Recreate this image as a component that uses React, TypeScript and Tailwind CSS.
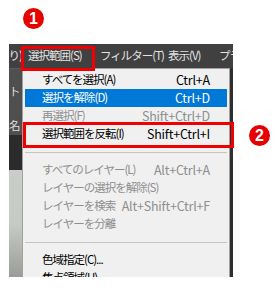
const font = "font-['Noto_Sans_CJK_JP','Noto_Sans',sans-serif]";

type Item =
  | { sep: true }
  | { sep?: false; label: string; key?: string; off?: boolean; on?: boolean };

const items: Item[] = [
  { label: "すべてを選択(A)", key: "Ctrl+A" },
  { label: "選択を解除(D)", key: "Ctrl+D", on: true },
  { label: "再選択(F)", key: "Shift+Ctrl+D", off: true },
  { label: "選択範囲を反転(I)", key: "Shift+Ctrl+I" },
  { sep: true },
  { label: "すべてのレイヤー(L)", key: "Alt+Ctrl+A", off: true },
  { label: "レイヤーの選択を解除(S)", off: true },
  { label: "レイヤーを検索", key: "Alt+Shift+Ctrl+F", off: true },
  { label: "レイヤーを分離", off: true },
  { sep: true },
  { label: "色域指定(C)..." },
  { label: "焦点領域(U)..." },
];

function Row({ item }: { item: Item }) {
  if (item.sep) {
    return (
      <div className="h-[18px] flex items-center">
        <div className="h-px w-full bg-[#c4c4c4]" />
      </div>
    );
  }
  const color = item.on ? "bg-[#0078d7] text-white" : item.off ? "text-[#8e8e8e]" : "text-black";
  return (
    <div className={`h-[18px] flex items-center justify-between whitespace-nowrap pl-[17px] pr-[17px] ${color}`}>
      <span className="text-[11.5px] tracking-[-1px]">{item.label}</span>
      {item.key && <span className="text-[12.5px] tracking-[-0.2px]">{item.key}</span>}
    </div>
  );
}

export default function App() {
  return (
    <div className={`relative w-[280px] h-[291px] bg-white overflow-hidden pt-[44px] pl-[9px] ${font}`}>
      <div className="w-[224px] h-[233px] flex flex-col">
        <div className="h-[24px] shrink-0 bg-[#404040] flex items-center text-[#e4e4e4] text-[11.5px] tracking-[-1px] whitespace-nowrap overflow-hidden">
          <div className="w-[13px] shrink-0 flex justify-end overflow-hidden">り)</div>
          <div className="w-[73px] shrink-0 pl-[6px]">選択範囲(S)</div>
          <div className="w-[67px] shrink-0 pl-[5px]">フィルター(T)</div>
          <div className="w-[51px] shrink-0 pl-[6px]">表示(V)</div>
          <div className="shrink-0 pl-[6px]">プラグイン(P)</div>
        </div>
        <div className="flex h-[209px]">
          <div className="w-[13px] shrink-0 flex flex-col overflow-hidden text-[11.5px] text-[#dedede] whitespace-nowrap">
            <div className="h-[67px] bg-[#4f4f4f] border-t border-[#5c5c5c] flex flex-col pt-[13px]">
              <span className="leading-[18px]">トフ</span>
              <span className="leading-[18px] mt-[16px]">名</span>
            </div>
            <div className="h-[35px] bg-[#2b2b2b]" />
            <div className="flex-1 bg-gradient-to-b from-[#c9cdc7] via-[#c7cbc5] to-[#9a9c98]" />
          </div>
          <div className="w-[208px] shrink-0 bg-[#f0f0f0] border-x border-t border-[#a0a0a0] pt-[2px] px-[2px] overflow-hidden">
            {items.map((it, i) => (
              <Row key={i} item={it} />
            ))}
          </div>
          <div className="w-[3px] shrink-0 bg-[#2e2e2e]" />
        </div>
      </div>

      <div className="absolute left-[21px] top-[46px] w-[74px] h-[25px] border-[3px] border-[#f00000]" />
      <div className="absolute left-[23px] top-[122px] w-[211px] h-[26px] border-[3px] border-[#f00000]" />
      <div className="absolute left-[23px] top-[8px] w-[21px] h-[21px] rounded-full bg-[#e60000] text-white text-[16px] font-bold flex items-center justify-center font-['Liberation_Sans',sans-serif]">
        1
      </div>
      <div className="absolute left-[249px] top-[125px] w-[21px] h-[21px] rounded-full bg-[#e60000] text-white text-[16px] font-bold flex items-center justify-center font-['Liberation_Sans',sans-serif]">
        2
      </div>
    </div>
  );
}
